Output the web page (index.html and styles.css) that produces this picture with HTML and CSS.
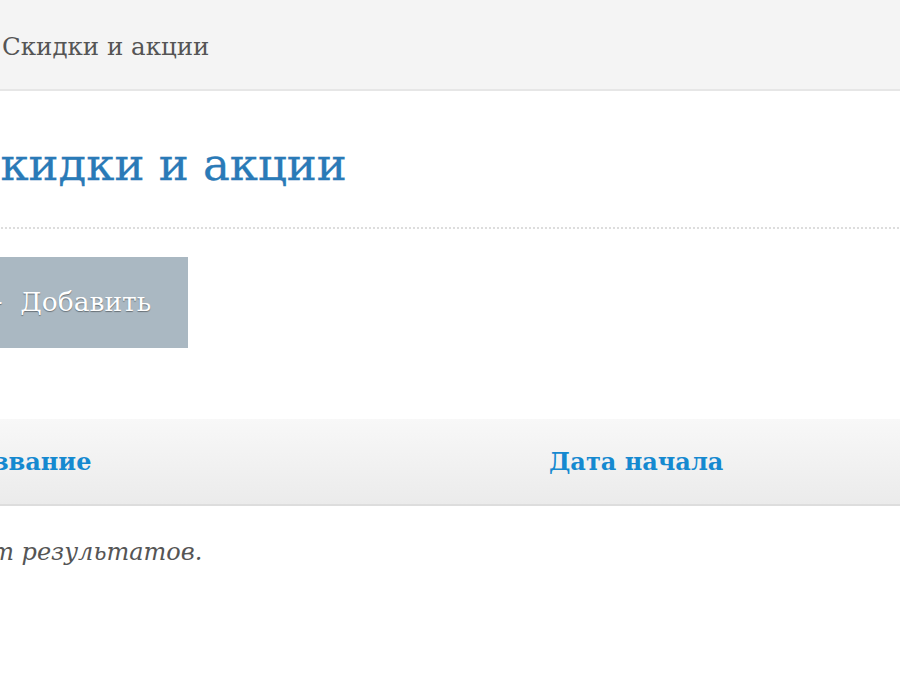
FILE: index.html
```html
<!DOCTYPE html>
<html lang="ru">
<head>
<meta charset="utf-8">
<title>Скидки и акции</title>
<link rel="stylesheet" href="styles.css">
</head>
<body>
<div class="page">
  <nav class="breadcrumbs">
    <span class="crumb-current">Скидки и акции</span>
  </nav>
  <main class="content">
    <h1 class="title">Скидки и акции</h1>
    <div class="actions">
      <a class="btn-add" href="#"><span class="plus">+</span> Добавить</a>
    </div>
    <table class="grid">
      <thead>
        <tr>
          <th class="col-name"><a href="#">Название</a></th>
          <th class="col-date"><a href="#">Дата начала</a></th>
        </tr>
      </thead>
      <tbody>
        <tr>
          <td class="empty" colspan="2">Нет результатов.</td>
        </tr>
      </tbody>
    </table>
  </main>
</div>
</body>
</html>
```
FILE: styles.css
```css
html, body {
  margin: 0;
  padding: 0;
  background: #ffffff;
  overflow: hidden;
}
body {
  font-family: "DejaVu Serif", "Liberation Serif", serif;
}
.page {
  margin-left: -30px;
  width: 960px;
}
.breadcrumbs {
  background: #f4f4f4;
  border-bottom: 2px solid #e6e6e6;
  display: flex;
  align-items: center;
  padding-left: 32px;
  padding-top: 3px;
  box-sizing: border-box;
  height: 91px;
  font-size: 24.5px;
  color: #555555;
}
.content {
  padding: 0;
}
.title {
  margin: 0 0 0 -4px;
  padding: 44px 0 32px;
  font-weight: normal;
  font-size: 45px;
  line-height: 60px;
  color: #2a7ab7;
  border-bottom: 2px dotted #dddddd;
  -webkit-text-stroke: 0.3px #2a7ab7;
}
.actions {
  padding-top: 28px;
}
.btn-add {
  display: inline-flex;
  align-items: center;
  height: 91px;
  width: 218px;
  box-sizing: border-box;
  padding-left: 12px;
  padding-bottom: 2px;
  background: #aab8c2;
  color: #ffffff;
  text-decoration: none;
  font-size: 26.5px;
  text-shadow: 0 1px 1px rgba(0,0,0,0.4);
}
.plus {
  margin-right: 16px;
}
.grid {
  margin-top: 71px;
  margin-left: -15px;
  width: calc(100% + 15px);
  border-collapse: collapse;
}
.grid thead th {
  height: 85px;
  text-align: left;
  padding: 0;
  background: linear-gradient(#f8f8f8, #ebebeb);
  border-bottom: 2px solid #dddddd;
  font-size: 24px;
}
.grid th a {
  color: #1589d0;
  text-decoration: none;
  font-weight: bold;
}
.col-name {
  width: 594px;
}
.empty {
  padding: 32px 0 0 1px;
  font-style: italic;
  font-size: 24px;
  color: #555555;
}
```
